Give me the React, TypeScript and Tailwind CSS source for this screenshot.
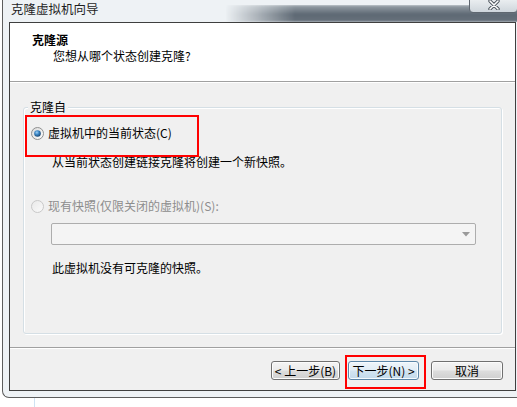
function Radio({ checked, disabled }: { checked?: boolean; disabled?: boolean }) {
  return (
    <svg width="13" height="13" viewBox="0 0 13 13" className="shrink-0">
      <defs>
        <linearGradient id={checked ? "rfill1" : "rfill2"} x1="0" y1="0" x2="1" y2="1">
          <stop offset="0" stopColor={disabled ? "#e8e8e8" : "#d9d9d9"} />
          <stop offset="1" stopColor={disabled ? "#fbfbfb" : "#ffffff"} />
        </linearGradient>
        <radialGradient id="rdot" cx="0.4" cy="0.35" r="0.7">
          <stop offset="0" stopColor="#9fd0f5" />
          <stop offset="0.45" stopColor="#3a86c6" />
          <stop offset="1" stopColor="#173f66" />
        </radialGradient>
      </defs>
      <circle
        cx="6.5"
        cy="6.5"
        r="6"
        fill={`url(#${checked ? "rfill1" : "rfill2"})`}
        stroke={disabled ? "#c8c8c8" : "#8e8f8f"}
        strokeWidth="1"
      />
      {checked && <circle cx="6.5" cy="6.5" r="3.3" fill="url(#rdot)" />}
    </svg>
  );
}

export default function App() {
  return (
    <div className="relative w-[517px] h-[407px] overflow-hidden bg-white font-['Noto_Sans_CJK_SC','Noto_Sans',sans-serif] text-[12px] leading-[16px] text-black">
      {/* window */}
      <div className="ml-[2px] w-[540px] h-[398px] border-l border-b border-[#5d5d5d] rounded-bl-[7px] bg-[#eef2f5] flex flex-col">
        {/* title bar */}
        <div className="relative h-[22px] shrink-0 pl-[8px]">
          <div className="absolute left-[222px] right-0 top-[5px] h-[17px] bg-[linear-gradient(180deg,#9aa4ab_0%,#5d6873_55%,#68727c_100%)] [mask-image:linear-gradient(90deg,transparent,black_70px)] blur-[1px]" />
          <span className="relative block pt-[1px] text-[12.5px] text-[#1e1e1e]">克隆虚拟机向导</span>
          {/* close button */}
          <div className="absolute left-[466px] top-[-3px] w-[49px] h-[16px] rounded-b-[4px] border border-[#5f6770] bg-[linear-gradient(180deg,#eef1f3,#cfd6dc)] flex items-center justify-center">
            <svg width="12" height="10" viewBox="0 0 12 10">
              <path d="M2 1 L10 9 M10 1 L2 9" stroke="#4a525a" strokeWidth="3.4" strokeLinecap="round" />
              <path d="M2 1 L10 9 M10 1 L2 9" stroke="#ffffff" strokeWidth="1.6" strokeLinecap="round" />
            </svg>
          </div>
        </div>

        {/* content */}
        <div className="ml-[6px] w-[507px] h-[369px] shrink-0 border border-[#3f3f3f] bg-[#f0f0f0] flex flex-col">
          {/* header */}
          <div className="h-[59px] shrink-0 bg-white border-b border-[#a0a0a0] pt-[9px]">
            <div className="pl-[22px] font-bold">克隆源</div>
            <div className="pl-[43px]">您想从哪个状态创建克隆?</div>
          </div>

          {/* body */}
          <div className="h-[266px] shrink-0 border-b border-[#a0a0a0] shadow-[inset_0_1px_0_#ffffff]">
            <div className="relative mt-[25px] ml-[13px] w-[479px] h-[227px] rounded-[3px] border border-[#d5dfe5] shadow-[inset_1px_1px_0_#ffffff,1px_1px_0_#ffffff]">
              <span className="absolute left-[4px] top-[-9px] px-[2px] bg-[#f0f0f0]">克隆自</span>

              <div className="flex items-center gap-[4px] pl-[7px] pt-[17px]">
                <Radio checked />
                <span>虚拟机中的当前状态(C)</span>
              </div>
              <div className="pl-[28px] mt-[13px]">从当前状态创建链接克隆将创建一个新快照。</div>

              <div className="flex items-center gap-[4px] pl-[7px] mt-[28px] text-[#8d8d8d]">
                <Radio disabled />
                <span>现有快照(仅限关闭的虚拟机)(S):</span>
              </div>
              <div className="ml-[27px] mt-[9px] w-[425px] h-[22px] rounded-[2px] border border-[#adadad] bg-[#f4f4f4] flex items-center justify-end pr-[5px]">
                <svg width="8" height="5" viewBox="0 0 8 5">
                  <path d="M0 0 H8 L4 4.5 Z" fill="#9a9a9a" />
                </svg>
              </div>
              <div className="pl-[28px] mt-[15px]">此虚拟机没有可克隆的快照。</div>
            </div>
          </div>

          {/* footer */}
          <div className="flex-1 flex justify-end items-start pt-[13px] pr-[12px] shadow-[inset_0_1px_0_#ffffff]">
            <button className="w-[69px] h-[19px] mr-[8px] rounded-[3px] border border-[#707070] bg-[linear-gradient(180deg,#f4f4f4_0%,#ebebeb_48%,#dddddd_52%,#cfcfcf_100%)] shadow-[inset_0_0_0_1px_#fcfcfc] text-[12px] leading-[17px]">
              &lt; 上一步(B)
            </button>
            <button className="w-[71px] h-[19px] mr-[12px] rounded-[3px] border border-[#5b86a8] bg-[linear-gradient(180deg,#eef5fa_0%,#e1edf6_48%,#d2e4f1_52%,#c3daeb_100%)] shadow-[inset_0_0_0_1px_#f6fbff] text-[12px] leading-[17px]">
              下一步(N) &gt;
            </button>
            <button className="w-[72px] h-[19px] rounded-[3px] border border-[#707070] bg-[linear-gradient(180deg,#f4f4f4_0%,#ebebeb_48%,#dddddd_52%,#cfcfcf_100%)] shadow-[inset_0_0_0_1px_#fcfcfc] text-[12px] leading-[17px]">
              取消
            </button>
          </div>
        </div>
      </div>

      {/* faint line below the window */}
      <div className="absolute left-[34px] top-[398px] w-px h-[9px] bg-[#cfe3f3]" />

      {/* red annotation boxes */}
      <div className="absolute left-[25px] top-[115px] w-[174px] h-[42px] border-2 border-[#ff0000]" />
      <div className="absolute left-[345px] top-[355px] w-[81px] h-[34px] border-2 border-[#ff0000]" />
    </div>
  );
}
